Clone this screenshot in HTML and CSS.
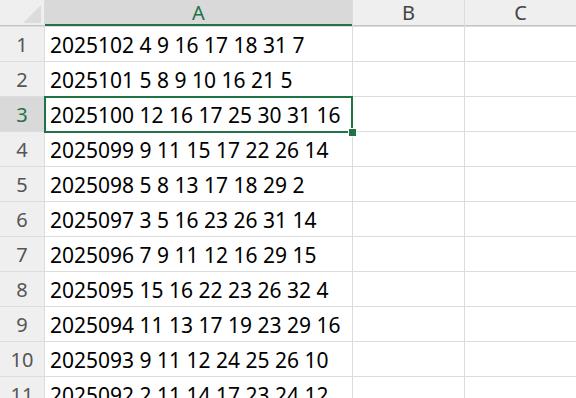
FILE: index.html
```html
<!DOCTYPE html>
<html lang="en">
<head>
    <meta charset="UTF-8">
    <meta name="viewport" content="width=device-width, initial-scale=1.0">
    <title>Sheet1</title>
    <link rel="stylesheet" href="styles.css">
</head>
<body>

    <div class="sheet">
        <!-- header row -->
        <div class="corner">
            <svg width="44" height="26" viewBox="0 0 44 26"><polygon points="41,5 41,23 23,23" fill="#dcdcdc"/></svg>
        </div>
        <div class="col-head active">A</div>
        <div class="col-head">B</div>
        <div class="col-head">C</div>

        <div class="row-head">1</div>
        <div class="cell">2025102 4 9 16 17 18 31 7</div>
        <div class="cell"></div>
        <div class="cell"></div>

        <div class="row-head">2</div>
        <div class="cell">2025101 5 8 9 10 16 21 5</div>
        <div class="cell"></div>
        <div class="cell"></div>

        <div class="row-head active">3</div>
        <div class="cell selected">2025100 12 16 17 25 30 31 16</div>
        <div class="cell"></div>
        <div class="cell"></div>

        <div class="row-head">4</div>
        <div class="cell">2025099 9 11 15 17 22 26 14</div>
        <div class="cell"></div>
        <div class="cell"></div>

        <div class="row-head">5</div>
        <div class="cell">2025098 5 8 13 17 18 29 2</div>
        <div class="cell"></div>
        <div class="cell"></div>

        <div class="row-head">6</div>
        <div class="cell">2025097 3 5 16 23 26 31 14</div>
        <div class="cell"></div>
        <div class="cell"></div>

        <div class="row-head">7</div>
        <div class="cell">2025096 7 9 11 12 16 29 15</div>
        <div class="cell"></div>
        <div class="cell"></div>

        <div class="row-head">8</div>
        <div class="cell">2025095 15 16 22 23 26 32 4</div>
        <div class="cell"></div>
        <div class="cell"></div>

        <div class="row-head">9</div>
        <div class="cell">2025094 11 13 17 19 23 29 16</div>
        <div class="cell"></div>
        <div class="cell"></div>

        <div class="row-head">10</div>
        <div class="cell">2025093 9 11 12 24 25 26 10</div>
        <div class="cell"></div>
        <div class="cell"></div>

        <div class="row-head">11</div>
        <div class="cell">2025092 2 11 14 17 23 24 12</div>
        <div class="cell"></div>
        <div class="cell"></div>
    </div>

</body>
</html>
```

FILE: styles.css
```css
html, body {
    margin: 0;
    padding: 0;
    height: 100%;
    overflow: hidden;
    background-color: #fff;
}
body {
    font-family: "Noto Sans", "Open Sans", sans-serif;
    color: #000;
}
.sheet {
    display: grid;
    grid-template-columns: 44px 307px 111px 111px;
    grid-template-rows: 26px repeat(11, 34px);
    gap: 1px;
    background-color: #dcdcdc;
    width: 576px;
}
.corner {
    background-color: #efefef;
    box-shadow: inset 0 -1px 0 #c4c4c4;
}
.corner svg {
    display: block;
}
.col-head {
    background-color: #efefef;
    color: #444;
    font-size: 20px;
    line-height: 26px;
    text-align: center;
    box-shadow: inset 0 -1px 0 #c4c4c4;
}
.col-head.active {
    background-color: #d9d9d9;
    color: #217346;
    box-shadow: inset 0 -2px 0 #217346;
}
.row-head {
    background-color: #efefef;
    color: #555;
    font-size: 20px;
    line-height: 36px;
    text-align: center;
}
.row-head.active {
    background-color: #d9d9d9;
    color: #217346;
}
.cell {
    background-color: #fff;
    font-size: 21px;
    line-height: 36px;
    padding-left: 5px;
    white-space: nowrap;
    overflow: hidden;
}
.cell.selected {
    position: relative;
    overflow: visible;
}
/* selection frame and fill handle */
.cell.selected::before {
    content: "";
    position: absolute;
    left: -1px;
    top: -1px;
    right: -1px;
    bottom: -2px;
    border: 2px solid #217346;
}
.cell.selected::after {
    content: "";
    position: absolute;
    right: -5px;
    bottom: -6px;
    width: 7px;
    height: 7px;
    background-color: #217346;
    border: 1px solid #fff;
}
```
